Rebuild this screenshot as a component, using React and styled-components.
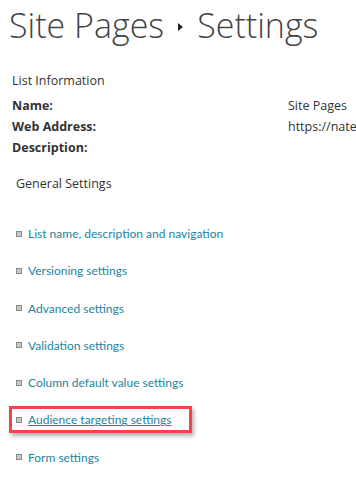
import React from "react";
import styled, { createGlobalStyle } from "styled-components";

const GlobalStyle = createGlobalStyle`
  body {
    margin: 0;
    background: #ffffff;
    font-family: "Open Sans", "Noto Sans", sans-serif;
    color: #444444;
  }
`;

const links = [
  "List name, description and navigation",
  "Versioning settings",
  "Advanced settings",
  "Validation settings",
  "Column default value settings",
  "Audience targeting settings",
  "Form settings",
];

export default function App() {
  return (
    <>
      <GlobalStyle />
      <Page>
        <Title>
          <span>Site Pages</span>
          <Arrow viewBox="0 0 5 8" aria-hidden="true">
            <path d="M0 0 L5 4 L0 8 Z" fill="#222" />
          </Arrow>
          <span>Settings</span>
        </Title>
        <Section>
          <SectionHead>List Information</SectionHead>
          <InfoGrid>
            <Label>Name:</Label>
            <Value>Site Pages</Value>
            <Label>Web Address:</Label>
            <Value>https://nate</Value>
            <Label>Description:</Label>
            <Value />
          </InfoGrid>
        </Section>
        <Settings>
          <SettingsHead>General Settings</SettingsHead>
          <LinkList>
            {links.map((text) => (
              <Item key={text} $active={text === "Audience targeting settings"}>
                <Bullet />
                <LinkText $active={text === "Audience targeting settings"}>{text}</LinkText>
              </Item>
            ))}
          </LinkList>
        </Settings>
      </Page>
    </>
  );
}

const Page = styled.div`
  width: 356px;
  height: 483px;
  overflow: hidden;
  white-space: nowrap;
`;

const Title = styled.h1`
  margin: 0;
  padding: 2px 0 0 9px;
  display: flex;
  align-items: center;
  gap: 14px;
  font-weight: 300;
  font-size: 34px;
  line-height: 46px;
  color: #444444;
`;

const Arrow = styled.svg`
  width: 5px;
  height: 8px;
  margin-top: 4px;
`;

const Section = styled.div`
  padding: 22px 0 0 12px;
`;

const SectionHead = styled.div`
  font-size: 12.5px;
  line-height: 21px;
  margin-bottom: 4px;
  color: #333333;
`;

const InfoGrid = styled.div`
  display: grid;
  grid-template-columns: 276px auto;
  font-size: 12.5px;
  line-height: 21px;
  color: #333333;
`;

const Label = styled.div`
  font-weight: 700;
`;

const Value = styled.div``;

const Settings = styled.div`
  padding: 15px 0 0 16px;
`;

const SettingsHead = styled.div`
  font-size: 12.5px;
  line-height: 21px;
  color: #333333;
`;

const LinkList = styled.ul`
  list-style: none;
  margin: 0;
  padding: 29px 0 0 0;
  display: flex;
  flex-direction: column;
  gap: 16.3px;
`;

const Item = styled.li`
  position: relative;
  display: flex;
  align-items: center;
  gap: 6px;
  height: 21px;
  &::after {
    content: "";
    display: ${(p) => (p.$active ? "block" : "none")};
    position: absolute;
    left: -7px;
    top: -3px;
    width: 177px;
    height: 21px;
    border: 3px solid #f2444a;
    box-shadow: 2px 3px 4px rgba(0, 0, 0, 0.3);
  }
`;

const Bullet = styled.span`
  width: 4px;
  height: 4px;
  background: #c8c8c8;
  border: 1px solid #8a8a8a;
  flex: none;
`;

const LinkText = styled.a`
  font-family: Lato, "Open Sans", sans-serif;
  font-size: 12px;
  line-height: 21px;
  color: #1c84a0;
  text-decoration: ${(p) => (p.$active ? "underline" : "none")};
  cursor: pointer;
`;
